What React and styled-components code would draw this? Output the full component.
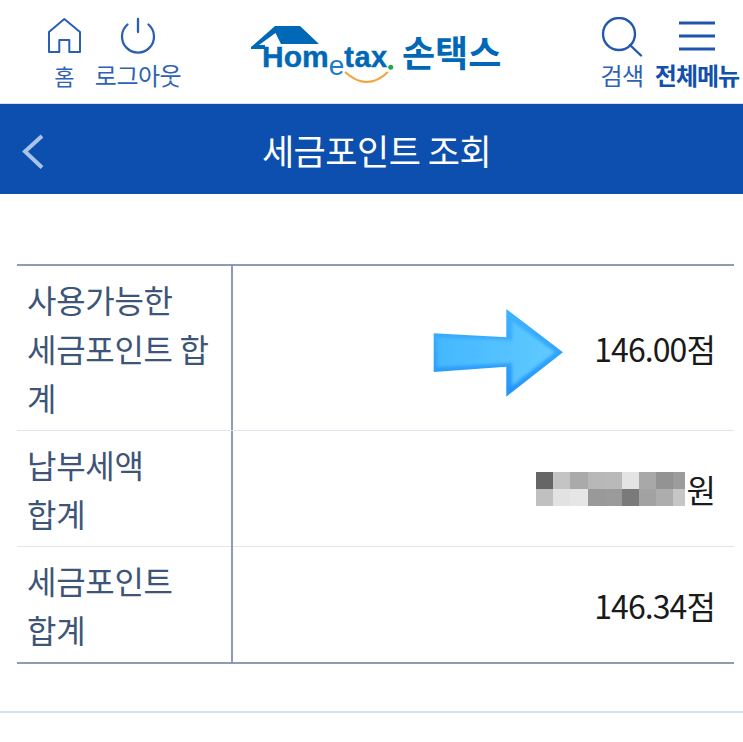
import React from "react";
import styled, { createGlobalStyle } from "styled-components";

const Global = createGlobalStyle`
  html, body { margin: 0; padding: 0; background: #fff; }
  body { font-family: "Noto Sans CJK KR", "Noto Sans", sans-serif; overflow: hidden; }
`;
const Page = styled.div`width: 743px; height: 742px; display: flex; flex-direction: column; overflow: hidden;`;
const Header = styled.header`box-sizing: border-box; height: 104px; display: grid; grid-template-columns: 250px 1fr 150px; background: #fff; border-bottom: 1px solid #d5dff0;`;
const NavGroup = styled.div`display: flex; gap: ${p => p.$gap}px; justify-content: ${p => p.$end ? "flex-end" : "flex-start"}; padding-left: ${p => p.$end ? 0 : 46}px;`;
const NavItem = styled.div`width: ${p => p.$w}px; display: flex; flex-direction: column; align-items: center; padding-top: 17px; color: #2458ad;`;
const NavLabel = styled.span`margin-top: 3px; font-size: ${p => p.$size || 24}px; line-height: 30px; white-space: nowrap; font-weight: ${p => p.$bold ? 700 : 400}; letter-spacing: ${p => p.$bold ? -1 : -0.5}px; color: ${p => p.$bold ? "#1150ac" : "#2f62b4"};`;
const LogoWrap = styled.div`display: flex; align-items: flex-start; padding-top: 20px;`;
const LogoText = styled.span`font-size: 36px; line-height: 62px; font-weight: 700; color: #0068b7; margin-left: 2px; white-space: nowrap;`;
const TitleBar = styled.div`height: 90px; background: #0d4fae; display: flex; align-items: center; justify-content: center; position: relative;`;
const Back = styled.svg`position: absolute; left: 22px; top: 30px;`;
const Title = styled.h1`margin: 0 0 0 10px; font-size: 35px; font-weight: 400; color: #fff; letter-spacing: -0.5px;`;
const TableWrap = styled.div`margin: 70px 9px 0 17px; border-top: 2px solid #8f9bb0; border-bottom: 2px solid #8f9bb0;`;
const Label = styled.div`border-right: 2px solid #8f9bb0; padding: 9px 0 0 10px; font-size: 32px; line-height: 49px; color: #3d5578; letter-spacing: -0.3px; white-space: nowrap;`;
const Row = styled.div`
  display: grid;
  grid-template-columns: 216px 1fr;
  height: ${p => p.$h}px;
  & + & { border-top: 1px solid #dfe4ee; }
  & + & ${Label} { margin-top: -1px; padding-top: 10px; }
`;
const Value = styled.div`position: relative; display: flex; align-items: center; justify-content: flex-end; padding-right: 19px; font-size: 32px; color: #1a1a1a; letter-spacing: -0.9px;`;
const Arrow = styled.svg`position: absolute; left: 200px; top: 43px;`;
const Mosaic = styled.div`display: grid; grid-template-columns: repeat(8, 17.2px) 12px; grid-auto-rows: 17px; margin-right: 1px;`;
const Cell = styled.span`background: ${p => p.$c};`;
const Foot = styled.div`margin-top: 47px; border-top: 2px solid #d6deec;`;

const cells = ["#666","#c4c4c4","#aaa","#b8b8b8","#b9b9b9","#e4e4e4","#a8a8a8","#939393","#9c9c9c","#c0c0c0","#e2e2e2","#e6e6e6","#999","#9b9b9b","#7a7a7a","#a2a2a2","#adadad","#c6c6c6"];

export default function App() {
  return (
    <Page>
      <Global />
      <Header>
        <NavGroup $gap={8}>
          <NavItem $w={36}>
            <svg width="36" height="40" viewBox="0 0 36 40" fill="none" stroke="#2a5fb3" strokeWidth="2"><path d="M18.3 2 3 15v20h10.3V23h10v12H34V15z" strokeLinejoin="round"/></svg>
            <NavLabel $size={22}>홈</NavLabel>
          </NavItem>
          <NavItem $w={96}>
            <svg width="36" height="40" viewBox="0 0 36 40" fill="none" stroke="#2a5fb3" strokeWidth="2.3" strokeLinecap="round"><path d="M7.5 7.5A16 16 0 1 0 28.5 7.5M18 2v13"/></svg>
            <NavLabel>로그아웃</NavLabel>
          </NavItem>
        </NavGroup>
        <LogoWrap>
          <svg width="150" height="70" viewBox="0 0 150 70">
            <path d="M1 27 25 6h25l19 18H31L25.5 13 9 25h6v4H1z" fill="#0068b7"/>
            <text x="12" y="47" fontFamily="Liberation Sans" fontSize="30" fontWeight="700" fill="#0068b7" stroke="#0068b7" strokeWidth="0.4">
              <tspan>Hom</tspan>
              <tspan dy="8" fontSize="28" fontWeight="400" fill="#1b7cc8" stroke="none">e</tspan>
              <tspan dy="-8" fontSize="29" letterSpacing="0.5">tax</tspan>
            </text>
            <circle cx="140.7" cy="47.3" r="2.5" fill="#2ca04a"/>
            <path d="M95 52Q117 72 138 52" fill="none" stroke="#f2a33a" strokeWidth="2"/>
          </svg>
          <LogoText>손택스</LogoText>
        </LogoWrap>
        <NavGroup $end $gap={4}>
          <NavItem $w={50}>
            <svg width="44" height="40" viewBox="0 0 44 40" fill="none" stroke="#2458ad" strokeWidth="2.4" strokeLinecap="round"><circle cx="19" cy="17" r="16"/><path d="M30 28l11 10.5"/></svg>
            <NavLabel>검색</NavLabel>
          </NavItem>
          <NavItem $w={92}>
            <svg width="36" height="40" viewBox="0 0 36 40" stroke="#1f55ad" strokeWidth="3"><path d="M0 6h36M0 19h36M0 32h36"/></svg>
            <NavLabel $bold>전체메뉴</NavLabel>
          </NavItem>
        </NavGroup>
      </Header>
      <TitleBar>
        <Back width="24" height="36" viewBox="0 0 24 36" fill="none" stroke="#a9c4e8" strokeWidth="4"><path d="M20 2 3 17.5l17 16"/></Back>
        <Title>세금포인트 조회</Title>
      </TitleBar>
      <TableWrap>
        <Row $h={164}>
          <Label>사용가능한<br />세금포인트 합<br />계</Label>
          <Value>
            <Arrow width="131" height="90" viewBox="0 0 131 90">
              <defs>
                <linearGradient id="edge" x1="0" y1="0" x2="0" y2="1"><stop offset="0" stopColor="#3fb5ff"/><stop offset="1" stopColor="#2294fb"/></linearGradient>
                <linearGradient id="fill" x1="0" y1="0" x2="1" y2="0"><stop offset="0" stopColor="#44b7ff"/><stop offset="1" stopColor="#60caff"/></linearGradient>
                <filter id="soft" x="-10%" y="-10%" width="120%" height="120%"><feGaussianBlur stdDeviation="1.5"/></filter>
              </defs>
              <path d="M.7 24.3l72.6 4V0L130 43.3 73.3 87.7V57.7L.7 63z" fill="url(#edge)"/>
              <path d="M4 28.5l75 2.5V12l43 31-43 34V54L4 58z" fill="url(#fill)" filter="url(#soft)"/>
            </Arrow>
            146.00점
          </Value>
        </Row>
        <Row $h={115}>
          <Label>납부세액<br />합계</Label>
          <Value>
            <Mosaic>{cells.map((c, i) => <Cell key={i} $c={c} />)}</Mosaic>원
          </Value>
        </Row>
        <Row $h={115}>
          <Label>세금포인트<br />합계</Label>
          <Value>146.34점</Value>
        </Row>
      </TableWrap>
      <Foot />
    </Page>
  );
}
